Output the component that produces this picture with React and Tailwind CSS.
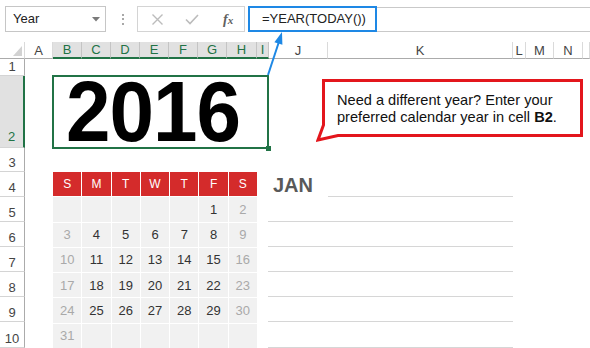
import React from "react";

const headerCols = [
  { l: "", sel: false, corner: true },
  { l: "A", sel: false },
  { l: "B", sel: true },
  { l: "C", sel: true },
  { l: "D", sel: true },
  { l: "E", sel: true },
  { l: "F", sel: true },
  { l: "G", sel: true },
  { l: "H", sel: true },
  { l: "I", sel: true },
  { l: "J", sel: false },
  { l: "K", sel: false },
  { l: "L", sel: false },
  { l: "M", sel: false },
  { l: "N", sel: false },
  { l: "", sel: false },
];

const rowHeads = [
  { n: "1", h: "h-[17px]", sel: false },
  { n: "2", h: "h-[72px]", sel: true },
  { n: "3", h: "h-[24px]", sel: false },
  { n: "4", h: "h-[25px]", sel: false },
  { n: "5", h: "h-[25px]", sel: false },
  { n: "6", h: "h-[25px]", sel: false },
  { n: "7", h: "h-[25px]", sel: false },
  { n: "8", h: "h-[25px]", sel: false },
  { n: "9", h: "h-[25px]", sel: false },
  { n: "10", h: "h-[26px]", sel: false },
];

const days = ["S", "M", "T", "W", "T", "F", "S"];
const weeks = [
  ["", "", "", "", "", "1", "2"],
  ["3", "4", "5", "6", "7", "8", "9"],
  ["10", "11", "12", "13", "14", "15", "16"],
  ["17", "18", "19", "20", "21", "22", "23"],
  ["24", "25", "26", "27", "28", "29", "30"],
  ["31", "", "", "", "", "", ""],
];

const lineRows = [
  "row-start-5",
  "row-start-6",
  "row-start-7",
  "row-start-8",
  "row-start-9",
  "row-start-10",
];

export default function App() {
  return (
    <div className="relative w-[590px] h-[348px] overflow-hidden bg-white font-['Liberation_Sans',Arial,sans-serif]">
      {/* Toolbar */}
      <div className="h-[42px] flex items-start pt-[6px]">
        <div className="ml-[5px] w-[101px] h-[26px] border border-[#c6c6c6] flex items-center pl-[7px] pr-[5px] text-[13px] text-[#222]">
          <span className="flex-1">Year</span>
          <svg width="8" height="5" viewBox="0 0 8 5">
            <path d="M0 0H8L4 4.5Z" fill="#7a7a7a" />
          </svg>
        </div>
        <div className="ml-[15px] w-[3px] h-[26px] flex flex-col items-center justify-center gap-[2.5px]">
          <div className="w-[2px] h-[2px] bg-[#a8a8a8]" />
          <div className="w-[2px] h-[2px] bg-[#a8a8a8]" />
          <div className="w-[2px] h-[2px] bg-[#a8a8a8]" />
        </div>
        <div className="ml-[13px] w-[108px] h-[26px] border border-[#d4d4d4] flex items-center">
          <svg className="ml-[14px]" width="11" height="11" viewBox="0 0 11 11">
            <path d="M0.5 0.5L10.5 10.5M10.5 0.5L0.5 10.5" stroke="#bcbcbc" strokeWidth="1.4" />
          </svg>
          <svg className="ml-[22px]" width="14" height="11" viewBox="0 0 14 11">
            <path d="M1 5.5L5 9.5L13 1" stroke="#bcbcbc" strokeWidth="1.6" fill="none" />
          </svg>
          <span className="ml-[24px] font-['Liberation_Serif',serif] italic font-bold text-[#606060] leading-none">
            <span className="text-[14px]">f</span>
            <span className="text-[11px]">x</span>
          </span>
        </div>
        <div className="ml-[3px] flex-1 h-[26px] flex">
          <div className="w-[129px] h-[26px] border-2 border-[#1e88e5] flex items-center pl-[12px] text-[13px] text-[#222]">
            =YEAR(TODAY())
          </div>
          <div className="flex-1 mt-px h-[25px] border-y border-[#c9c9c9]" />
        </div>
      </div>

      {/* Column headers */}
      <div className="grid grid-cols-[25px_28px_29px_29px_29px_29px_29px_29px_30px_12px_59px_185px_13px_28px_29px_1fr] h-[17px]">
        {headerCols.map((c, i) =>
          c.corner ? (
            <div key={i} className="relative border-r border-r-[#dadada] border-b border-b-[#ababab]">
              <svg className="absolute right-[2px] bottom-[2px]" width="9" height="10" viewBox="0 0 9 10">
                <path d="M9 0V10H0Z" fill="#d2d2d2" />
              </svg>
            </div>
          ) : c.sel ? (
            <div
              key={i}
              className="flex items-center justify-center text-[13px] leading-none text-[#217346] bg-[#e1e1e1] border-r border-r-[#c4c4c4] border-b-2 border-b-[#217346]"
            >
              {c.l}
            </div>
          ) : (
            <div
              key={i}
              className="flex items-center justify-center text-[13px] leading-none text-[#444] border-r border-r-[#dadada] border-b border-b-[#ababab]"
            >
              {c.l}
            </div>
          )
        )}
      </div>

      {/* Body */}
      <div className="flex">
        <div className="w-[25px] flex flex-col">
          {rowHeads.map((r) =>
            r.sel ? (
              <div
                key={r.n}
                className={`${r.h} bg-[#e1e1e1] border-r-2 border-r-[#217346] border-b border-b-[#d4d4d4] flex items-end justify-center pb-[3px] text-[13px] leading-[14px] text-[#217346]`}
              >
                {r.n}
              </div>
            ) : (
              <div
                key={r.n}
                className={`${r.h} border-r border-r-[#ababab] border-b border-b-[#d4d4d4] flex items-end justify-center pb-px text-[13px] leading-[14px] text-[#444]`}
              >
                {r.n}
              </div>
            )
          )}
        </div>

        <div className="flex-1 grid grid-cols-[28px_29px_29px_29px_29px_29px_29px_30px_12px_59px_185px_13px_28px_29px_1fr] grid-rows-[17px_72px_24px_repeat(6,25px)_26px]">
          {/* Year box B2:I2 */}
          <div className="col-start-2 col-span-8 row-start-2 -my-px -ml-px relative border-2 border-[#217346] flex items-center justify-center pr-[15px]">
            <span className="text-[80px] font-bold leading-none text-black scale-y-[1.06] tracking-[-1px]">2016</span>
            <div className="absolute -right-[3.5px] -bottom-[3.5px] w-[5px] h-[5px] bg-[#217346]" />
          </div>

          {/* Calendar */}
          <div className="col-start-2 col-span-7 row-start-4 row-span-7 grid grid-cols-7 grid-rows-7 gap-px bg-white">
            {days.map((d, i) => (
              <div key={"d" + i} className="bg-[#d42b2b] text-white text-[12px] flex items-center justify-center">
                {d}
              </div>
            ))}
            {weeks.flatMap((w, wi) =>
              w.map((n, di) => (
                <div
                  key={wi + "-" + di}
                  className={
                    di === 0 || di === 6
                      ? "bg-[#f1f1f1] text-[#a9a9a9] text-[13px] flex items-center justify-center"
                      : "bg-[#f1f1f1] text-[#333] text-[13px] flex items-center justify-center"
                  }
                >
                  {n}
                </div>
              ))
            )}
          </div>

          {/* JAN */}
          <div className="col-start-10 row-start-4 flex items-center pl-[4px] text-[20px] font-bold text-[#595959] leading-none">
            JAN
          </div>
          <div className="col-start-11 row-start-4 border-b border-[#d6d6d6]" />
          {lineRows.map((r) => (
            <div key={r} className={`col-start-10 col-span-2 ${r} -ml-px border-b border-[#d6d6d6]`} />
          ))}
        </div>
      </div>

      {/* Arrow overlay */}
      <svg className="absolute left-0 top-0 pointer-events-none" width="590" height="348" viewBox="0 0 590 348">
        <line x1="268" y1="75" x2="279.2" y2="41" stroke="#1e88e5" strokeWidth="2" />
        <path d="M282 32L282.4 44.8L274.4 42.2Z" fill="#1e88e5" />
      </svg>

      {/* Callout */}
      <div className="absolute left-[316px] top-[77px] w-[270px] h-[66px]">
        <svg className="absolute inset-0" width="270" height="66" viewBox="0 0 270 66">
          <path
            d="M7.5 3.5H265.5V58.5H22L2 63L7.5 48Z"
            fill="white"
            stroke="#e3161c"
            strokeWidth="3"
            strokeLinejoin="miter"
          />
        </svg>
        <div className="relative pl-[21px] pt-[15px] text-[14.6px] leading-[17px] text-[#111] whitespace-nowrap">
          Need a different year? Enter your
          <br />
          preferred calendar year in cell <b>B2</b>.
        </div>
      </div>
    </div>
  );
}
